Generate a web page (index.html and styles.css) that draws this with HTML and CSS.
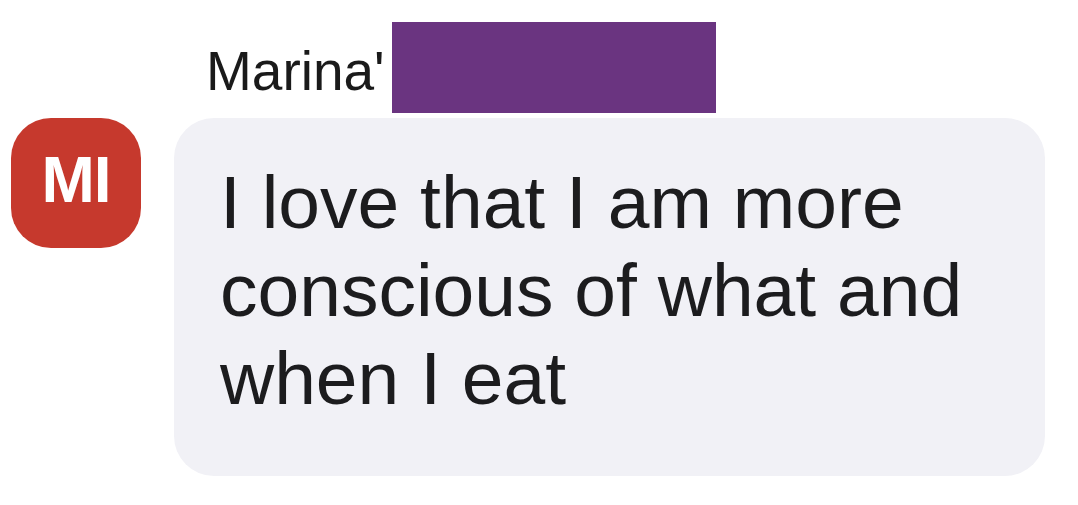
FILE: index.html
```html
<!DOCTYPE html>
<html lang="en">
<head>
  <meta charset="UTF-8">
  <title>Message</title>
  <link rel="stylesheet" href="styles.css">
</head>
<body>
  <div class="message">
    <div class="name">
      Marina'
      <span class="redacted"></span>
    </div>
    <div class="avatar">MI</div>
    <div class="bubble">I love that I am more conscious of what and when I eat</div>
  </div>
</body>
</html>
```

FILE: styles.css
```css
body {
  margin: 0;
  background: #ffffff;
  font-family: 'Liberation Sans', Arial, sans-serif;
}

.message {
  display: grid;
  grid-template-columns: 130px 871px;
  column-gap: 33px;
  padding-left: 11px;
}

.name {
  grid-column: 2;
  grid-row: 1;
  position: relative;
  padding: 41px 0 0 32px;
  margin-bottom: 17px;
  font-size: 55px;
  line-height: 60px;
  color: #1a1a1a;
}

.redacted {
  position: absolute;
  left: 218px;
  top: 22px;
  width: 324px;
  height: 91px;
  background-color: #6a3480;
}

.avatar {
  grid-column: 1;
  grid-row: 2;
  width: 130px;
  height: 130px;
  border-radius: 40px;
  background-color: #c6392d;
  color: white;
  font-weight: bold;
  font-size: 64px;
  display: flex;
  align-items: center;
  justify-content: center;
  padding-bottom: 6px;
  box-sizing: border-box;
  letter-spacing: -1px;
}

.bubble {
  grid-column: 2;
  grid-row: 2;
  height: 358px;
  box-sizing: border-box;
  padding: 40px 46px 54px;
  border-radius: 40px;
  background-color: #f1f1f6;
  font-size: 75px;
  line-height: 88px;
  color: #1c1c1e;
}
```
